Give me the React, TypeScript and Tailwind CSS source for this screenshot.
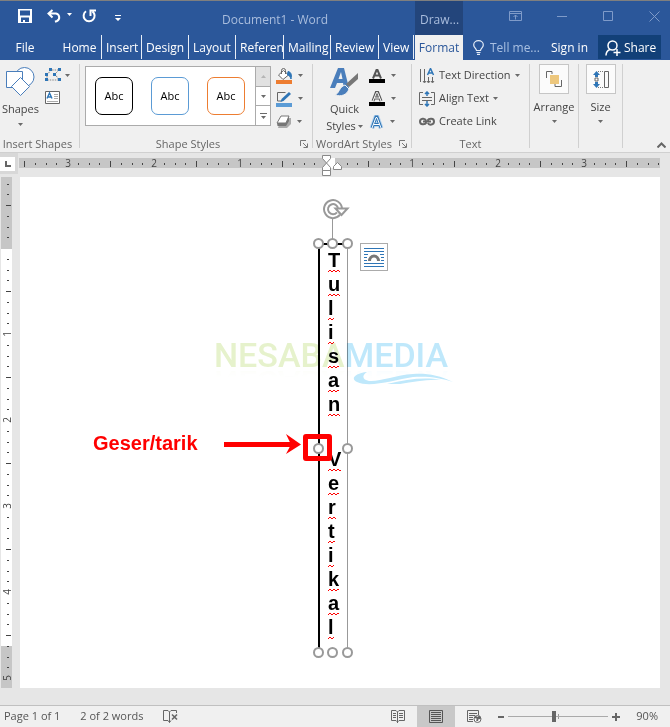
import React from 'react'

const tabs = [
  { label: 'Home', width: 'w-[52px] pl-3' },
  { label: 'Insert', width: 'w-10' },
  { label: 'Design', width: 'w-[47px]' },
  { label: 'Layout', width: 'w-[47px]' },
  { label: 'Referen', width: 'w-12' },
  { label: 'Mailing', width: 'w-[47px]' },
  { label: 'Review', width: 'w-12' },
  { label: 'View', width: 'w-[35px]' }
]

const shapePresets = [
  { name: 'Black outline', border: 'border-black' },
  { name: 'Blue outline', border: 'border-[#5b9bd5]' },
  { name: 'Orange outline', border: 'border-[#ed7d31]' }
]

const INCH = 86

const Caret: React.FC<{ className?: string }> = ({ className = '' }) => (
  <svg className={`h-[3px] w-[5px] shrink-0 fill-[#6a6a6a] ${className}`} viewBox="0 0 5 3" aria-hidden="true">
    <path d="M0 0h5L2.5 3z" />
  </svg>
)

const Separator: React.FC = () => <div className="h-[84px] w-px shrink-0 bg-[#d0d0d0]" />

const Launcher: React.FC<{ label: string }> = ({ label }) => (
  <button aria-label={label} className="flex h-4 w-4 shrink-0 items-center justify-center">
    <svg width="8" height="8" viewBox="0 0 8 8" fill="none" stroke="#777">
      <path d="M.5 6V.5H6M3 3l4 4M7.5 3.5v4h-4" />
    </svg>
  </button>
)

const TitleBar: React.FC = () => (
  <div className="flex h-[35px] items-stretch border-t border-[#7f7f7f]">
    <div className="flex w-[222px] shrink-0 items-start pl-[18px] pt-2 text-white">
      <button aria-label="Save">
        <svg width="14" height="14" viewBox="0 0 14 14" fill="currentColor">
          <path fillRule="evenodd" d="M0 0h14v14H0zM2 1.500v5h10v-5zM3 8.500V13h2v-2h2v2h4V8.500z" />
        </svg>
      </button>
      <button aria-label="Undo" className="ml-[15px]">
        <svg width="15" height="14" viewBox="0 0 15 14" fill="none" stroke="currentColor" strokeWidth="2">
          <path d="M5.500 1L1.500 4.500l4 4M1.500 4.500H9a4 4 0 0 1 1 7.500l-2 .8" />
        </svg>
      </button>
      <button aria-label="Undo list" className="ml-[5px] pt-1">
        <Caret className="fill-white" />
      </button>
      <button aria-label="Repeat" className="ml-[10px]">
        <svg width="14" height="14" viewBox="0 0 14 14" fill="none" stroke="currentColor" strokeWidth="2">
          <path d="M4 2.300A5.500 5.500 0 1 0 10.500 2.500M8.500 7V1.500H14" />
        </svg>
      </button>
      <button aria-label="Customize toolbar" className="ml-[19px] pt-[6px]">
        <svg width="6" height="7" viewBox="0 0 6 7" fill="currentColor">
          <path d="M0 0h6v1H0zM0 3h6L3 6z" />
        </svg>
      </button>
    </div>
    <div className="flex-1 pt-[2px] text-xs leading-[34px] text-[#a9bddd]">Document1 - Word</div>
    <div className="w-12 shrink-0 bg-[#23457b] pl-[5px] pt-[2px] text-xs leading-[34px] text-[#a9bddd]">Draw...</div>
    <div className="flex w-[207px] shrink-0 items-center gap-[35px] pb-1 pl-[46px] text-[#7f9bc9]">
      <button aria-label="Ribbon display options">
        <svg width="13" height="10" viewBox="0 0 13 10" fill="none" stroke="currentColor">
          <path d="M.5.5h12v9H.5zM.5 2.500h12M6.500 8.500V4M4.500 6l2-2 2 2" />
        </svg>
      </button>
      <button aria-label="Minimize">
        <svg width="11" height="11" viewBox="0 0 11 11" stroke="currentColor">
          <path d="M0 5.500h10" />
        </svg>
      </button>
      <button aria-label="Maximize">
        <svg width="11" height="11" viewBox="0 0 11 11" fill="none" stroke="currentColor">
          <path d="M.5.5h9v9h-9z" />
        </svg>
      </button>
      <button aria-label="Close">
        <svg width="11" height="11" viewBox="0 0 11 11" stroke="currentColor">
          <path d="M.5.5l10 10M10.500.5l-10 10" />
        </svg>
      </button>
    </div>
  </div>
)

const TabBar: React.FC = () => (
  <div className="flex h-[25px] items-stretch text-xs text-white">
    <button className="w-[50px] shrink-0 pt-px">File</button>
    {tabs.map((tab) => (
      <button
        key={tab.label}
        className={`mb-px shrink-0 overflow-hidden whitespace-nowrap border-r border-[#e8eef7] px-1 pt-[2px] ${tab.width}`}
      >
        {tab.label}
      </button>
    ))}
    <button className="ml-px w-12 shrink-0 bg-[#f0f0f0] pt-px text-[#2b579a]">Format</button>
    <button className="flex items-center whitespace-nowrap pl-[10px] text-[#a9c0e2]">
      <svg className="mr-[6px]" width="11" height="15" viewBox="0 0 11 15" fill="none" stroke="#e4ecf7" strokeWidth="1.2">
        <path d="M3.500 10.500c0-2-2.800-3-2.800-5.500a4.800 4.300 0 0 1 9.600 0c0 2.500-2.800 3.500-2.800 5.500zM3.500 12.500h4M4 14.300h3" />
      </svg>
      Tell me...
    </button>
    <button className="ml-auto whitespace-nowrap px-[10px] pt-px">Sign in</button>
    <button className="mb-px mr-[9px] flex w-[63px] shrink-0 items-center gap-[3px] bg-[#124078] pl-[7px] pt-px">
      <svg width="16" height="16" viewBox="0 0 16 16" fill="none" stroke="currentColor" strokeWidth="1.500">
        <circle cx="7.500" cy="5.500" r="4.500" />
        <path d="M1 15.500c0-3 1.500-5 4-6M8.500 12.500h7M12 9v7" />
      </svg>
      Share
    </button>
  </div>
)

const GroupLabel: React.FC<{ children: React.ReactNode }> = ({ children }) => (
  <div className="flex-1 whitespace-nowrap text-center leading-4 text-[#666]">{children}</div>
)

const InsertShapes: React.FC = () => (
  <div className="w-[79px] shrink-0">
    <div className="flex h-[72px]">
      <button className="flex w-[41px] flex-col items-center pt-[2px]">
        <svg width="31" height="31" viewBox="0 0 31 31" fill="#fff" stroke="#4a7ebb">
          <circle cx="19.500" cy="11" r="9.500" />
          <path d="M1.500 5.500h16v16h-16z" />
          <path d="M15.500 11.500l9 9-9 9-9-9z" />
        </svg>
        <span className="leading-6">Shapes</span>
        <Caret className="mt-[2px]" />
      </button>
      <div className="flex flex-col pl-1">
        <button aria-label="Edit shape" className="flex h-[22px] items-center gap-1">
          <svg width="16" height="14" viewBox="0 0 16 14">
            <path d="M2 12V7l4-5h8l-4 4 4 6z" fill="none" stroke="#888" strokeDasharray="1.500 1" />
            <path d="M0 10h3v3H0zM0 5h3v3H0zM4 0h3v3H4zM13 0h3v3h-3zM8 5h3v3H8zM13 10h3v3h-3z" fill="#2e75b6" />
          </svg>
          <Caret />
        </button>
        <button aria-label="Draw text box" className="flex h-[22px] items-center">
          <svg width="15" height="13" viewBox="0 0 15 13" fill="none">
            <path d="M.5.5h14v12H.5z" fill="#fff" stroke="#666" />
            <path d="M2 7.500L4.500 2 7 7.500M3 6h3" stroke="#2e75b6" strokeWidth="1.400" />
            <path d="M9 3.500h4M9 5.500h4M9 7.500h4M2 10.500h11" stroke="#aaa" />
          </svg>
        </button>
      </div>
    </div>
    <div className="flex pr-1">
      <GroupLabel>Insert Shapes</GroupLabel>
    </div>
  </div>
)

const ShapeStyles: React.FC = () => (
  <div className="w-[232px] shrink-0">
    <div className="flex h-[72px] pl-[5px]">
      <div className="mt-[2px] flex h-[60px] border border-[#ababab] bg-white">
        <div className="flex w-[169px] items-center gap-[18px] pl-[9px]">
          {shapePresets.map((preset) => (
            <button
              key={preset.name}
              aria-label={preset.name}
              className={`h-[38px] w-[38px] rounded-[7px] border text-[11px] text-black ${preset.border}`}
            >
              Abc
            </button>
          ))}
        </div>
        <div className="flex w-[15px] flex-col border-l border-[#ababab]">
          <button aria-label="Previous row" className="flex flex-1 items-center justify-center bg-[#e1e1e1]">
            <Caret className="rotate-180 fill-[#b5b5b5]" />
          </button>
          <button aria-label="Next row" className="flex flex-1 items-center justify-center border-y border-[#ababab]">
            <Caret />
          </button>
          <button aria-label="More styles" className="flex flex-1 flex-col items-center justify-center gap-[2px]">
            <span className="h-px w-[7px] bg-[#6a6a6a]" />
            <Caret />
          </button>
        </div>
      </div>
      <div className="flex flex-col pl-[5px]">
        <button aria-label="Shape fill" className="flex h-[23px] items-center gap-[6px]">
          <svg width="16" height="16" viewBox="0 0 16 16" fill="none">
            <path d="M0 12h16v4H0z" fill="#ed7d31" />
            <path d="M7.500 2.500l5 4.500-5.500 4.500-4.500-4.500z" fill="#fff" stroke="#666" />
            <path d="M5.500 6V2.500a2 2 0 0 1 4 0V6" stroke="#666" />
            <path d="M12 3.500c3 .5 4 3 3 7.500-1-2.500-1.500-3.500-3.500-4z" fill="#2e75b6" stroke="#2e75b6" />
          </svg>
          <Caret />
        </button>
        <button aria-label="Shape outline" className="flex h-[23px] items-center gap-[6px]">
          <svg width="16" height="16" viewBox="0 0 16 16" fill="none">
            <path d="M0 12h16v4H0z" fill="#5b9bd5" />
            <path d="M9.500 1.500h-8v8.500h4" stroke="#666" />
            <path d="M13 1l2 2-7.500 7-3 1 1-3z" fill="#2e75b6" />
          </svg>
          <Caret />
        </button>
        <button aria-label="Shape effects" className="flex h-[23px] items-center gap-[6px]">
          <svg width="15" height="14" viewBox="0 0 15 14">
            <path d="M5 3h10v6l-4 4H2z" fill="#aaa" />
            <path d="M5 1h8l-3 7H1z" fill="#fff" stroke="#777" />
            <path d="M1 8h9l3-7v5l-3 5H1.500z" fill="#777" />
          </svg>
          <Caret />
        </button>
      </div>
    </div>
    <div className="flex">
      <GroupLabel>Shape Styles</GroupLabel>
      <Launcher label="Shape style settings" />
    </div>
  </div>
)

const WordArtStyles: React.FC = () => (
  <div className="w-[98px] shrink-0">
    <div className="flex h-[72px] pl-[11px]">
      <button className="flex w-[41px] flex-col items-center pt-[2px]">
        <svg width="29" height="31" viewBox="0 0 29 31">
          <path fillRule="evenodd" d="M0 22L8 2h6l5 20h-5l-1-5H7l-2 5zM8.500 13h4L11 6z" fill="#4a7ebb" />
          <path d="M28 7v6l-9 8-3-3z" fill="#777" />
          <path d="M15 19l4 4c-2 6-8 8-14 6 4-1 4-8 10-10z" fill="#4a7ebb" stroke="#f0f0f0" />
        </svg>
        <span className="leading-6">Quick</span>
        <span className="flex items-center gap-[2px] leading-[10px]">
          Styles
          <Caret />
        </span>
      </button>
      <div className="flex flex-col pl-1">
        <button aria-label="Text fill" className="flex h-[23px] items-center gap-[6px]">
          <svg width="16" height="14" viewBox="0 0 16 14">
            <path d="M0 10h16v4H0z" />
            <path d="M4 9.500L7.500 1h1L12 9.500M5.500 6.500h5" fill="none" stroke="#555" strokeWidth="2" />
          </svg>
          <Caret />
        </button>
        <button aria-label="Text outline" className="flex h-[23px] items-center gap-[6px]">
          <svg width="16" height="15" viewBox="0 0 16 15">
            <path d="M0 11h16v4H0z" />
            <path d="M4 10L7.500 1h1L12 10M5.500 7h5" fill="none" stroke="#555" strokeWidth="3" />
            <path d="M4 10L7.500 1.500h1L12 10M5.500 7h5" fill="none" stroke="#fff" />
          </svg>
          <Caret />
        </button>
        <button aria-label="Text effects" className="flex h-[23px] items-center gap-[6px]">
          <svg width="15" height="14" viewBox="0 0 15 14" fill="none">
            <path d="M3 13L7 2h1l4 11M4.500 9.500h6" stroke="#b9d5ee" strokeWidth="5" />
            <path d="M3 13L7 2h1l4 11M4.500 9.500h6" stroke="#2e75b6" strokeWidth="3" />
            <path d="M3 13L7 2.500h1L12 13M4.500 9.500h6" stroke="#fff" />
          </svg>
          <Caret />
        </button>
      </div>
    </div>
    <div className="flex">
      <GroupLabel>WordArt Styles</GroupLabel>
      <Launcher label="WordArt settings" />
    </div>
  </div>
)

const TextGroup: React.FC = () => (
  <div className="w-[117px] shrink-0">
    <div className="flex h-[72px] flex-col whitespace-nowrap pl-[7px]">
      <button className="flex h-[23px] items-center gap-1">
        <svg width="16" height="16" viewBox="0 0 16 16" fill="none" stroke="#666">
          <path d="M1.500 1v13M5.500 1v13M9.500 9v5M13.500 9v5M4 13l1.500 2L7 13M8 13l1.500 2 1.500-2M12 13l1.500 2 1.500-2" />
          <path d="M8.500 7l3-6.500 3 6.500M9.500 5h4" stroke="#2e75b6" strokeWidth="1.500" />
        </svg>
        Text Direction
        <Caret />
      </button>
      <button className="flex h-[23px] items-center gap-1">
        <svg width="16" height="16" viewBox="0 0 16 16" fill="none" stroke="#666">
          <path d="M4 1.500H.5v12H4M12 1.500h3.500v12H12M3 6.500h10M3 9.500h10" />
          <path d="M8 5V1M6 3l2-2 2 2M8 10v5M6 13l2 2 2-2" stroke="#2e75b6" strokeWidth="1.500" />
        </svg>
        Align Text
        <Caret />
      </button>
      <button className="flex h-[23px] items-center gap-1">
        <svg width="16" height="10" viewBox="0 0 16 10" fill="none" stroke="#666" strokeWidth="2">
          <path d="M7 3.500C6 .8 1 1 1 4.500S6 8 7.500 5.500M9 6c1 2.700 6 2 6-1.500S10 1 8.500 3.500M4 4.500h8" />
        </svg>
        Create Link
      </button>
    </div>
    <div className="flex">
      <GroupLabel>Text</GroupLabel>
    </div>
  </div>
)

const BoxedTool: React.FC<{ label: string; width: string; children: React.ReactNode }> = ({ label, width, children }) => (
  <button className={`flex shrink-0 flex-col items-center self-start ${width}`}>
    <span className="flex h-[30px] w-[30px] items-center justify-center border border-[#c6c6c6] bg-[#fbfbfb]">{children}</span>
    <span className="leading-[26px]">{label}</span>
    <Caret />
  </button>
)

const Ribbon: React.FC = () => (
  <div className="flex border-b border-[#d0d0d0] bg-[#f0f0f0] pt-1 text-[11px] text-[#444]">
    <InsertShapes />
    <Separator />
    <ShapeStyles />
    <Separator />
    <WordArtStyles />
    <Separator />
    <TextGroup />
    <Separator />
    <BoxedTool label="Arrange" width="w-12">
      <svg width="16" height="16" viewBox="0 0 16 16" fill="none">
        <path d="M.5 7V.5H6V3M15.500 9v6.500H9V13" stroke="#666" />
        <path d="M4 4h9v9H4z" fill="#edc77d" />
      </svg>
    </BoxedTool>
    <Separator />
    <BoxedTool label="Size" width="w-[43px]">
      <svg width="16" height="17" viewBox="0 0 16 17" fill="none">
        <path d="M3.500 0L7 4H5v2H2V4H0zM3.500 17L7 13H5v-2H2v2H0z" fill="#2e75b6" />
        <path d="M2 7h3v3H2zM11.500.5h4v16h-4z" stroke="#666" />
        <path d="M5 .5h6M5 16.500h6" stroke="#777" strokeDasharray="1 1" />
      </svg>
    </BoxedTool>
    <Separator />
    <button aria-label="Collapse the ribbon" className="mb-1 ml-auto mr-1 self-end">
      <svg width="9" height="6" viewBox="0 0 9 6" fill="none" stroke="#666" strokeWidth="2">
        <path d="M.5 5.500l4-4 4 4" />
      </svg>
    </button>
  </div>
)

// Eighth-inch marks, with a longer one at the half inch and a number at each inch
const range = (from: number, to: number) => Array.from({ length: to - from + 1 }, (_, i) => from + i)

const HorizontalRuler: React.FC = () => (
  <div className="mr-[10px] flex-1 overflow-hidden pt-[5px]">
    <svg className="block w-full overflow-visible" height="16" aria-label="Horizontal ruler">
      <rect width="100%" height="10" fill="#c6c6c6" />
      <rect x="307" width="9" height="10" fill="#fff" />
      {range(-28, 31).map((n) => {
        const x = Math.round(307 + (n * INCH) / 8)
        if (n === 0) return null
        if (n % 8 === 0) {
          return (
            <text key={n} x={x} y="9" textAnchor="middle" fontSize="10" fill="#444">
              {Math.abs(n / 8)}
            </text>
          )
        }
        return n % 4 === 0 ? (
          <rect key={n} x={x - 1} y="3" width="1" height="6" fill="#444" />
        ) : (
          <rect key={n} x={x - 1} y="5" width="1" height="2" fill="#444" />
        )
      })}
    </svg>
  </div>
)

const VerticalRuler: React.FC = () => (
  <svg className="ml-px mr-[7px] mt-[3px] block shrink-0 overflow-visible" width="12" height="511" aria-label="Vertical ruler">
    <rect width="11" height="511" fill="#fff" />
    <rect width="11" height="72" fill="#c6c6c6" />
    <rect y="469" width="11" height="42" fill="#c6c6c6" />
    {range(-6, 40).map((n) => {
      const y = Math.round(71 + (n * INCH) / 8)
      if (n === 0) return null
      if (n % 8 === 0) {
        return (
          <text key={n} transform={`translate(10 ${y}) rotate(-90)`} textAnchor="middle" fontSize="10" fill="#444">
            {n / 8}
          </text>
        )
      }
      return n % 4 === 0 ? (
        <rect key={n} x="5" y={y} width="5" height="1" fill="#444" />
      ) : (
        <rect key={n} x="6" y={y} width="2" height="1" fill="#444" />
      )
    })}
  </svg>
)

const Handle: React.FC<{ className: string }> = ({ className }) => (
  <span className={`absolute h-[11px] w-[11px] rounded-full border-2 border-[#999] bg-white ${className}`} />
)

const VerticalWord: React.FC<{ word: string }> = ({ word }) => (
  <div className="flex flex-col items-start">
    {word.split('').map((letter, index) => (
      <span key={index} className="inline-grid h-6 grid-rows-[18px_4px] leading-[18px]">
        {letter}
        <svg className="h-1 w-0 min-w-full overflow-hidden" aria-hidden="true">
          <path d="M0 3l2-2 2 2 2-2 2 2 2-2 2 2 2-2" fill="none" stroke="#f00" />
        </svg>
      </span>
    ))}
  </div>
)

const TextBox: React.FC = () => (
  <div className="absolute left-[298px] top-[66px] h-[410px] w-[30px] border-l-2 border-r border-t-2 border-l-black border-r-[#999] border-t-black bg-white">
    <div className="pl-2 pt-[6px] font-['Liberation_Sans',Arial,sans-serif] text-xl font-bold text-black">
      <VerticalWord word="Tulisan" />
      <div className="h-[31px]" />
      <VerticalWord word="Vertikal" />
    </div>
    <div className="absolute -top-7 left-[12px] h-6 w-px bg-[#999]" />
    <svg className="absolute -top-[46px] left-[2px]" width="28" height="23" viewBox="0 0 28 23" fill="none">
      <path d="M18 9.500A7 7 0 1 0 16.500 14.500" stroke="#999" strokeWidth="6" />
      <path d="M18 9.500A7 7 0 1 0 16.500 14.500" stroke="#fff" strokeWidth="2" />
      <path d="M13.500 9.500h12L19.500 16z" fill="#fff" stroke="#999" strokeWidth="2" />
    </svg>
    <Handle className="-left-[7px] -top-[7px]" />
    <Handle className="-top-[7px] left-[7px]" />
    <Handle className="-right-[6px] -top-[7px]" />
    <Handle className="-left-[7px] top-[198px]" />
    <Handle className="-right-[6px] top-[198px]" />
    <Handle className="-bottom-[5px] -left-[7px]" />
    <Handle className="-bottom-[5px] left-[7px]" />
    <Handle className="-bottom-[5px] -right-[6px]" />
    <button
      aria-label="Layout options"
      className="absolute -top-[2px] left-[40px] flex h-7 w-7 items-center justify-center border border-[#ababab] bg-white"
    >
      <svg width="20" height="20" viewBox="0 0 20 20" fill="none">
        <path d="M0 1.500h20M0 4.500h20M0 7.500h4M16 7.500h4M0 10.500h3M17 10.500h3M0 13.500h3M17 13.500h3M0 16.500h20M0 19.500h20" stroke="#2e75b6" />
        <path d="M5.500 14a4.500 5 0 0 1 9 0" stroke="#777" strokeWidth="3" />
      </svg>
    </button>
  </div>
)

const Watermark: React.FC = () => (
  <div className="pointer-events-none absolute left-[194px] top-[154px] mix-blend-multiply">
    <div className="flex items-baseline whitespace-nowrap font-['Liberation_Sans_Narrow',Roboto,sans-serif] text-[34px] font-medium leading-[48px] [-webkit-box-reflect:below_-20px_linear-gradient(transparent_60%,rgba(0,0,0,0.2))]">
      <span className="text-[#e6f2cc]">NESABA</span>
      <span className="text-[#bfe8fb]">MEDIA</span>
    </div>
    <svg className="absolute left-[139px] top-[41px]" width="100" height="15" viewBox="0 0 100 15" fill="#bfe8fb">
      <path d="M14 0C2 1-3 7 4 10c13 6 37-2 56-5 16-1 28 1 40 5C86 3 73 1 60 2 42 3 27 10 16 9 10 8 8 4 14 0z" />
      <path d="M34 12c20-5 39-7 54-4-14-1-27 2-41 4z" />
    </svg>
  </div>
)

const Document: React.FC = () => (
  <main className="relative mt-[3px] h-[511px] flex-1 bg-white">
    <TextBox />
    <Watermark />
    <div className="absolute left-[73px] top-[253px] font-['Liberation_Sans',Arial,sans-serif] text-xl font-bold leading-[26px] text-[#f00]">
      Geser/tarik
    </div>
    <svg className="absolute left-[204px] top-[257px]" width="77" height="20" viewBox="0 0 77 20" fill="#f00">
      <path d="M0 8h70v5H0z" />
      <path d="M62 0l15 10.500L62 20l5-9.500z" />
    </svg>
    <div className="absolute left-[283px] top-[257px] h-[27px] w-[29px] rounded-[3px] border-[5px] border-[#f00]" />
  </main>
)

const Workspace: React.FC = () => (
  <div className="flex-1 bg-[#e6e6e6] text-[#444]">
    <div className="flex h-[21px]">
      <div className="mr-px w-[18px] shrink-0 bg-[#d8d8d8] pt-1">
        <button aria-label="Tab selector" className="flex h-[14px] w-[15px] items-center bg-white pl-[5px]">
          <svg width="6" height="6" viewBox="0 0 6 6" fill="#666">
            <path d="M0 0h2v4h4v2H0z" />
          </svg>
        </button>
      </div>
      <div className="relative flex flex-1">
        <HorizontalRuler />
        {/* indent markers hang over the ruler's edge */}
        <svg className="absolute left-[303px] top-[2px]" width="21" height="22" viewBox="0 0 21 22" fill="#fff" stroke="#888">
          <path d="M.5.5h8v3l-4 4.500-4-4.500zM.5 15.500v-3l4-4.500 4 4.500v3zM.5 15.500h8v5h-8zM11.500 14.500v-3l4-4 4 4v3z" />
        </svg>
      </div>
    </div>
    <div className="flex pb-[17px] pr-[10px]">
      <VerticalRuler />
      <Document />
    </div>
  </div>
)

const StatusBar: React.FC = () => (
  <footer className="flex h-[22px] items-stretch whitespace-nowrap border-t border-[#c0c0c0] bg-[#f0f0f0] text-[11px] text-[#555]">
    <button className="pl-1">Page 1 of 1</button>
    <button className="ml-5">2 of 2 words</button>
    <button aria-label="Proofing errors" className="ml-5">
      <svg width="15" height="13" viewBox="0 0 15 13" fill="none" stroke="#666">
        <path d="M6.500 12.500V2L5 .5H.5v10H5l1.500 2 1.500-2M6.500 2L8 .5h5.500V3" />
        <path d="M9 4.500l5 5M14 4.500l-5 5" strokeWidth="1.600" />
      </svg>
    </button>
    <button aria-label="Read mode" className="ml-auto pr-3">
      <svg width="14" height="13" viewBox="0 0 14 13" fill="none" stroke="#666">
        <path d="M6.500 13V2L5 .5H.5v10H5l1.500 1.500L8 10.500h5.500V.5H8L6.500 2M2 3.500h3M2 5.500h3M2 7.500h3M8 3.500h4M8 5.500h4M8 7.500h4" />
      </svg>
    </button>
    <button aria-label="Print layout" className="flex w-[38px] items-center justify-center bg-[#c8c8c8]">
      <svg width="14" height="13" viewBox="0 0 14 13" fill="none" stroke="#555">
        <path d="M.5.5h13v12H.5zM2 2.500h10M2 4.500h10M2 6.500h10M2 8.500h10M2 10.500h10" />
      </svg>
    </button>
    <button aria-label="Web layout" className="pl-3">
      <svg width="15" height="13" viewBox="0 0 15 13" fill="none" stroke="#666">
        <path d="M6 11.500H.5V.5h11V5M2 3.500h8M2 5.500h6M2 7.500h4M2 9.500h4" />
        <circle cx="10.500" cy="9" r="3.500" fill="#fff" />
        <path d="M8 7l3 1-1 3M12 6l1 3" strokeWidth="2" />
      </svg>
    </button>
    <button aria-label="Zoom out" className="ml-4 flex items-center">
      <span className="h-[2px] w-[6px] bg-[#666]" />
    </button>
    <div className="relative ml-1 flex w-[100px] items-center">
      <span className="absolute left-[50px] h-[5px] w-px bg-[#999]" />
      <input
        type="range"
        aria-label="Zoom"
        min={0}
        max={100}
        defaultValue={45}
        className="relative h-[11px] w-full appearance-none bg-transparent [&::-webkit-slider-runnable-track]:h-px [&::-webkit-slider-runnable-track]:bg-[#aaa] [&::-webkit-slider-thumb]:-mt-[5px] [&::-webkit-slider-thumb]:h-[11px] [&::-webkit-slider-thumb]:w-1 [&::-webkit-slider-thumb]:appearance-none [&::-webkit-slider-thumb]:bg-[#666]"
      />
    </div>
    <button aria-label="Zoom in" className="ml-1 flex items-center">
      <svg width="8" height="8" viewBox="0 0 8 8" stroke="#666" strokeWidth="2">
        <path d="M4 0v8M0 4h8" />
      </svg>
    </button>
    <button className="ml-4 mr-3">90%</button>
  </footer>
)

const App: React.FC = () => (
  <div className="flex min-h-screen flex-col font-['Open_Sans','Noto_Sans',sans-serif]">
    <header className="bg-[#2b579a]">
      <TitleBar />
      <TabBar />
      <Ribbon />
    </header>
    <Workspace />
    <StatusBar />
  </div>
)

export default App
